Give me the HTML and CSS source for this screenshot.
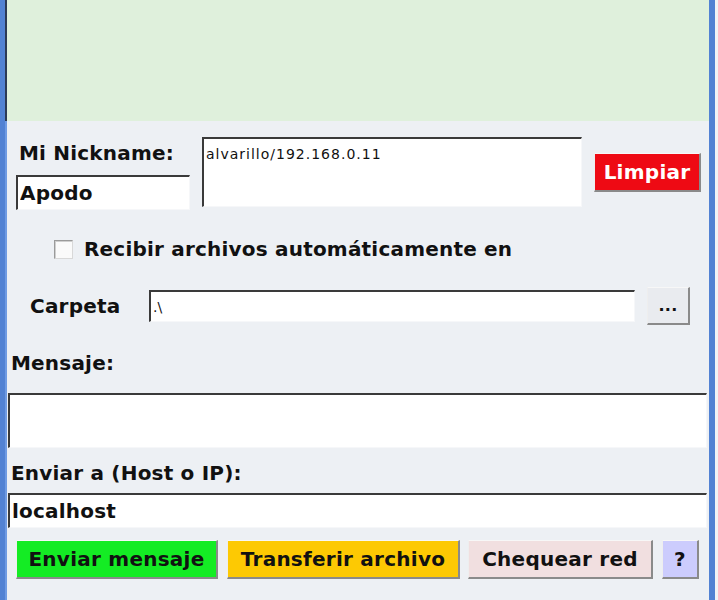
FILE: index.html
```html
<!DOCTYPE html>
<html lang="es">
<head>
<meta charset="utf-8">
<title>Chat LAN</title>
<link rel="stylesheet" href="styles.css">
</head>
<body>
<div class="window">
  <div class="chat"></div>
  <div class="panel">
    <div class="top-row">
      <div class="nick">
        <div class="label nick-label">Mi Nickname:</div>
        <input class="field nick-input" type="text" value="Apodo">
      </div>
      <textarea class="field users">alvarillo/192.168.0.11</textarea>
      <button class="btn limpiar">Limpiar</button>
    </div>
    <label class="auto">
      <input class="check" type="checkbox">
      <span>Recibir archivos automáticamente en</span>
    </label>
    <div class="folder-row">
      <span class="label folder-label">Carpeta</span>
      <input class="field folder-input" type="text" value=".\">
      <button class="btn browse">...</button>
    </div>
    <div class="label section-label">Mensaje:</div>
    <textarea class="field message"></textarea>
    <div class="label section-label host-label">Enviar a (Host o IP):</div>
    <input class="field host" type="text" value="localhost">
    <div class="actions">
      <button class="btn send">Enviar mensaje</button>
      <button class="btn transfer">Transferir archivo</button>
      <button class="btn check-net">Chequear red</button>
      <button class="btn help">?</button>
    </div>
  </div>
</div>
</body>
</html>
```
FILE: styles.css
```css
* { box-sizing: border-box; }
html, body {
  margin: 0;
  padding: 0;
  background: #f2f4f6;
}
body {
  width: 718px;
  height: 600px;
  overflow: hidden;
  font-family: "DejaVu Sans", "Liberation Sans", sans-serif;
  color: #111;
}
.window {
  width: 715px;
  height: 600px;
  background: #edf0f4;
  border-left: 5px solid #5282d3;
  border-right: 6px solid #5282d3;
  box-shadow: inset 2px 0 0 #6f9be3;
}
.chat {
  height: 121px;
  background: #dff0dc;
  border-left: 2px solid #2c3a56;
}
.panel {
  display: flex;
  flex-direction: column;
}
.label {
  font-weight: bold;
  font-size: 20px;
  line-height: 24px;
  letter-spacing: 0.2px;
  white-space: nowrap;
}
.field {
  background: #fff;
  border-style: solid;
  border-width: 2px 1px 1px 2px;
  border-color: #3a3a3a #f6f7f9 #f6f7f9 #3a3a3a;
  outline: none;
  margin: 0;
  font-family: "DejaVu Sans", "Liberation Sans", sans-serif;
  color: #111;
}
input.field {
  font-weight: bold;
  font-size: 20px;
  letter-spacing: 0.2px;
  padding: 0 0 0 2px;
}
textarea.field {
  resize: none;
  overflow: hidden;
  font-size: 14px;
  line-height: 18px;
  letter-spacing: 1px;
  padding: 6px 2px;
}
.btn {
  margin: 0;
  font-family: "DejaVu Sans", "Liberation Sans", sans-serif;
  font-weight: bold;
  font-size: 20px;
  letter-spacing: 0.25px;
  color: #111;
  padding: 0;
  border-style: solid;
  border-width: 1px 2px 2px 1px;
  border-color: #f7f7f7 #8a8a8a #8a8a8a #eeeeee;
  cursor: pointer;
}

.top-row {
  display: flex;
  align-items: flex-start;
  margin-top: 16px;
}
.nick {
  margin-left: 11px;
  padding-top: 4px;
  display: flex;
  flex-direction: column;
}
.nick-label { padding-left: 3px; }
.nick-input {
  margin-top: 10px !important;
  width: 174px;
  height: 35px;
}
.users {
  margin-left: 12px !important;
  width: 380px;
  height: 70px;
}
.limpiar {
  margin-left: 12px;
  margin-top: 16px;
  width: 107px;
  height: 39px;
  background: #ee0a14;
  color: #fff;
}

.auto {
  margin-top: 27px;
  height: 24px;
  display: flex;
  align-items: center;
  padding-left: 49px;
  font-weight: bold;
  font-size: 20px;
  letter-spacing: 0.2px;
}
.check {
  -webkit-appearance: none;
  appearance: none;
  width: 19px;
  height: 19px;
  margin: 0 11px 0 0;
  background: #fafafa;
  border-style: solid;
  border-width: 1px;
  border-color: #9a9a9a #d8d8d8 #d8d8d8 #9a9a9a;
  box-shadow: inset 1px 1px 0 #cfcfcf;
}

.folder-row {
  margin-top: 26px;
  height: 38px;
  display: flex;
  align-items: center;
}
.folder-label {
  width: 144px;
  padding-left: 25px;
}
.folder-input {
  width: 486px;
  height: 32px;
  font-weight: normal !important;
  font-size: 14px !important;
  letter-spacing: 0 !important;
}
.browse {
  margin-left: 12px;
  width: 43px;
  height: 38px;
  background: #e9ebef;
  font-size: 16px;
}

.section-label {
  margin-top: 26px;
  padding-left: 6px;
}
.message {
  margin: 18px 0 0 3px !important;
  width: 699px;
  height: 55px;
}
.host-label { margin-top: 13px; }
.host {
  margin: 8px 0 0 3px !important;
  width: 699px;
  height: 35px;
}

.actions {
  margin-top: 12px;
  padding-left: 11px;
  display: flex;
  gap: 9px;
}
.actions .btn { height: 39px; }
.send { width: 202px; background: #14ec24; }
.transfer { width: 233px; background: #fdc903; }
.check-net { width: 185px; background: #f1dfe0; margin-left: -1px; }
.help { width: 37px; background: #ccccfd; }
```
